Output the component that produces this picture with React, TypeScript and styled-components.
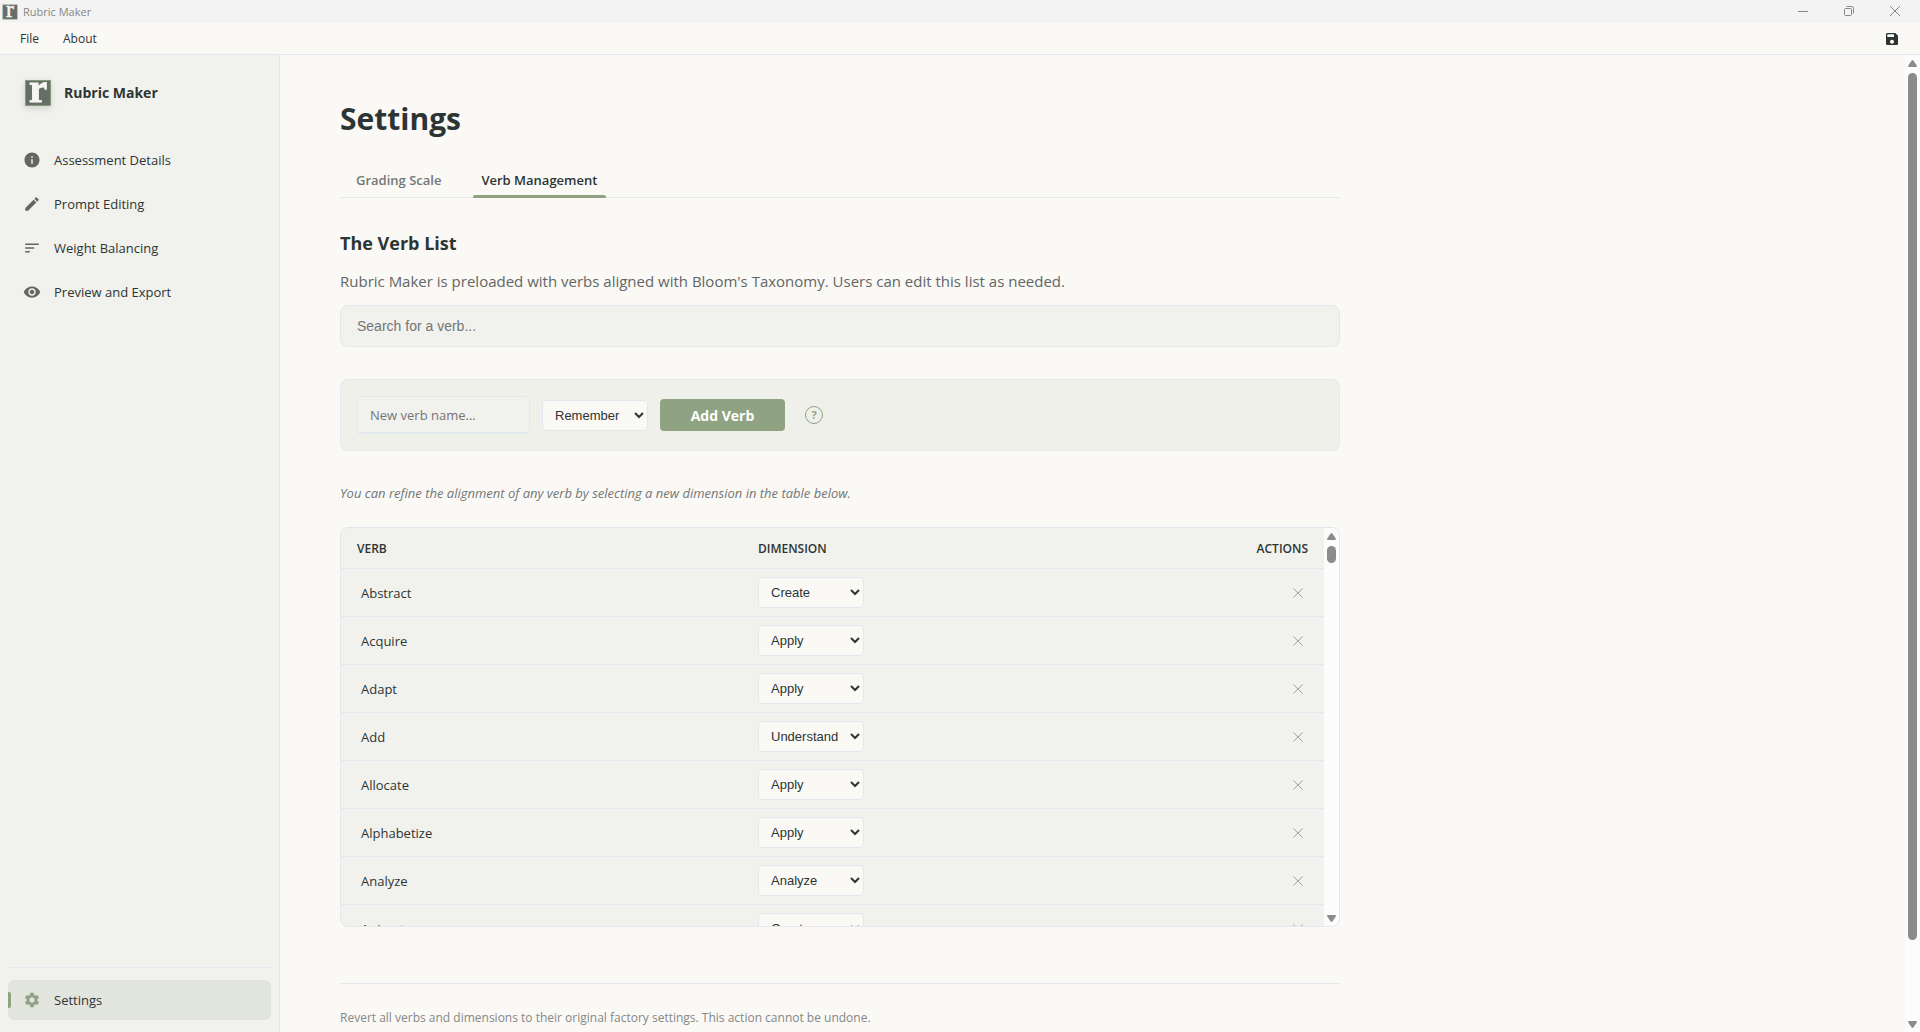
import React, { useState } from "react";
import styled, { createGlobalStyle } from "styled-components";
import { MdInfo, MdEdit, MdSort, MdVisibility, MdSettings, MdSave } from "react-icons/md";

const color = {
  page: "#faf9f6",
  panel: "#f1f1ed",
  border: "#e2e8f0",
  text: "#2d3534",
  soft: "#636665",
  muted: "#747776",
  accent: "#8fa382",
  active: "#e2e5de",
  thumb: "#8b8b8b",
};

const uiFont = '"Open Sans", "Noto Sans", sans-serif';
const controlFont = '"Liberation Sans", Arial, sans-serif';

const GlobalStyle = createGlobalStyle`
  *, *::before, *::after { box-sizing: border-box; }
  body {
    margin: 0;
    background: ${color.page};
    color: ${color.text};
    font-family: ${uiFont};
    font-size: 13px;
    line-height: 20px;
  }
  button { font-family: inherit; cursor: pointer; }
`;

const Window = styled.div`
  display: flex;
  flex-direction: column;
  height: 100vh;
  overflow: hidden;
`;

const TitleBar = styled.header`
  display: flex;
  align-items: center;
  flex: none;
  height: 23px;
  padding: 0 20px 0 2px;
  gap: 5px;
  background: #f3f3f3;
  color: #868686;
  font-size: 11px;
`;

const WindowControls = styled.div`
  display: flex;
  gap: 36px;
  margin-left: auto;
`;

const WindowButton = styled.button`
  display: flex;
  width: 10px;
  height: 20px;
  padding: 0 0 2px;
  border: 0;
  background: none;
  align-items: center;
  color: #868686;
`;

const MenuBar = styled.nav`
  display: flex;
  align-items: center;
  flex: none;
  height: 32px;
  padding: 1px 20px 0;
  gap: 24px;
  border-bottom: 1px solid ${color.border};
`;

const MenuButton = styled.button`
  padding: 0;
  border: 0;
  background: none;
  color: ${color.text};
  font-size: 12px;
  line-height: 20px;
`;

const SaveButton = styled(MenuButton)`
  display: flex;
  margin-left: auto;
`;

const Body = styled.div`
  display: flex;
  flex: 1;
  min-height: 0;
`;

const Sidebar = styled.aside`
  display: flex;
  flex-direction: column;
  flex: none;
  width: 280px;
  padding: 24px 8px 12px;
  background: ${color.panel};
  border-right: 1px solid ${color.border};
`;

const Brand = styled.div`
  display: flex;
  align-items: center;
  gap: 12px;
  padding: 0 16px;
  margin-bottom: 33px;
  font-size: 14px;
  font-weight: 700;
  svg { filter: drop-shadow(0 2px 3px rgba(0, 0, 0, 0.15)); }
`;

const NavList = styled.nav`
  display: flex;
  flex-direction: column;
  gap: 4px;
`;

const NavFooter = styled.div`
  margin-top: auto;
  padding-top: 12px;
  border-top: 1px solid ${color.border};
`;

const NavItem = styled.button<{ $active?: boolean }>`
  position: relative;
  display: flex;
  align-items: center;
  width: 100%;
  height: 40px;
  padding: 0 15px;
  gap: 13px;
  border: 0;
  border-radius: 6px;
  background: ${(p) => (p.$active ? color.active : "transparent")};
  color: ${color.text};
  font-size: 13px;
  font-weight: ${(p) => (p.$active ? 500 : 400)};
  line-height: 20px;
  svg { color: ${(p) => (p.$active ? color.accent : color.soft)}; }
  &::before {
    content: "";
    display: ${(p) => (p.$active ? "block" : "none")};
    position: absolute;
    left: 0;
    top: 12px;
    width: 3px;
    height: 16px;
    background: ${color.accent};
    border-radius: 0 2px 2px 0;
  }
`;

const Main = styled.main`
  flex: 1;
  min-width: 0;
  padding: 40px 60px;
  overflow-y: auto;
  scrollbar-width: none;
`;

const Content = styled.div`
  max-width: 1000px;
`;

const PageTitle = styled.h1`
  margin: 0 0 20px;
  font-size: 30px;
  font-weight: 700;
  line-height: 48px;
`;

const Tabs = styled.div`
  display: flex;
  gap: 8px;
  margin-bottom: 33px;
  border-bottom: 1px solid ${color.border};
`;

const Tab = styled.button<{ $active?: boolean }>`
  position: relative;
  padding: 7px 16px;
  border: 0;
  background: none;
  color: ${(p) => (p.$active ? color.text : color.muted)};
  font-size: 13px;
  font-weight: 600;
  line-height: 20px;
  &::after {
    content: "";
    display: ${(p) => (p.$active ? "block" : "none")};
    position: absolute;
    left: 5%;
    bottom: -1px;
    width: 90%;
    height: 3px;
    background: ${color.accent};
    border-radius: 2px 2px 0 0;
  }
`;

const SectionTitle = styled.h2`
  margin: 0 0 14px;
  font-size: 18px;
  font-weight: 700;
  line-height: 24px;
`;

const Lead = styled.p`
  margin: 0 0 12px;
  color: ${color.soft};
  font-size: 15px;
  line-height: 24px;
`;

const SearchInput = styled.input`
  display: block;
  width: 100%;
  height: 42px;
  margin-bottom: 32px;
  padding: 0 16px;
  border: 1px solid ${color.border};
  border-radius: 8px;
  background: ${color.panel};
  color: ${color.text};
  font-family: ${controlFont};
  font-size: 14px;
  &::placeholder { color: #757575; }
`;

const AddForm = styled.form`
  display: flex;
  align-items: center;
  gap: 12px;
  height: 72px;
  margin-bottom: 32px;
  padding: 0 16px;
  border: 1px solid ${color.border};
  border-radius: 8px;
  background: #f0f0eb;
`;

const NameInput = styled.input`
  width: 173px;
  height: 38px;
  padding: 0 12px;
  border: 1px solid ${color.border};
  border-bottom-width: 2px;
  border-radius: 4px;
  background: ${color.panel};
  color: ${color.text};
  font-family: ${uiFont};
  font-size: 13px;
  &::placeholder { color: #757575; }
`;

const DimensionSelect = styled.select`
  display: block;
  width: 106px;
  height: 31px;
  padding: 0 0 0 8px;
  border: 1px solid ${color.border};
  border-radius: 4px;
  background: ${color.page};
  color: ${color.text};
  font-family: ${controlFont};
  font-size: 13px;
`;

const AddButton = styled.button`
  width: 125px;
  height: 32px;
  border: 0;
  border-radius: 4px;
  background: ${color.accent};
  color: #fff;
  font-size: 14px;
  font-weight: 700;
`;

const HelpButton = styled.button`
  width: 18px;
  height: 18px;
  margin-left: 8px;
  padding: 0;
  border: 1px solid ${color.accent};
  border-radius: 50%;
  background: none;
  color: ${color.accent};
  font-size: 11px;
  font-weight: 700;
  line-height: 16px;
`;

const Hint = styled.p`
  margin: 0 0 24px;
  color: ${color.muted};
  font-size: 13px;
  font-style: italic;
`;

const TableFrame = styled.div`
  display: flex;
  height: 400px;
  margin-bottom: 56px;
  border: 1px solid ${color.border};
  border-radius: 8px;
  background: ${color.panel};
  overflow: hidden;
`;

const TableScroll = styled.div`
  flex: 1;
  min-width: 0;
  overflow-y: auto;
  scrollbar-width: none;
`;

const Table = styled.table`
  width: 100%;
  table-layout: fixed;
  border-collapse: separate;
  border-spacing: 0;
`;

const HeadCell = styled.th<{ $width?: string; $end?: boolean }>`
  position: sticky;
  top: 0;
  z-index: 1;
  width: ${(p) => p.$width ?? "auto"};
  height: 41px;
  padding: 2px 16px 0;
  border-bottom: 1px solid ${color.border};
  background: ${color.panel};
  font-size: 12px;
  font-weight: 600;
  text-align: ${(p) => (p.$end ? "right" : "left")};
  text-transform: uppercase;
`;

const Cell = styled.td`
  height: 48px;
  padding: 0 16px;
  border-bottom: 1px solid ${color.border};
`;

const VerbName = styled.span`
  padding: 4px;
  font-size: 13px;
`;

const DeleteButton = styled.button`
  display: flex;
  align-items: center;
  justify-content: center;
  width: 20px;
  height: 20px;
  margin-left: auto;
  padding: 0;
  border: 0;
  background: none;
  color: #a0a3a1;
`;

const ResetSection = styled.section`
  padding: 24px 0;
  border-top: 1px solid ${color.border};
`;

const ResetText = styled.p`
  margin: 0;
  color: #858887;
  font-size: 12px;
`;

const Track = styled.div`
  display: flex;
  flex-direction: column;
  align-items: center;
  flex: none;
  width: 15px;
  padding: 5px 0 4px;
  background: #fcfcfc;
`;

const Thumb = styled.div<{ $size: string }>`
  flex: none;
  width: 9px;
  height: ${(p) => p.$size};
  margin: 6px 0 auto;
  border-radius: 5px;
  background: ${color.thumb};
`;

const LogoMark = styled.svg`
  flex: none;
  overflow: visible;
`;

function Scrollbar({ size }: { size: string }) {
  return (
    <Track aria-hidden="true">
      <svg width="9" height="7" viewBox="0 0 9 7" fill={color.thumb}>
        <path d="M4.500 0Q5 0 5.500.8L8.800 5.600Q9.200 7 8 7H1Q-.2 7 .2 5.600L3.500.8Q4 0 4.500 0Z" />
      </svg>
      <Thumb $size={size} />
      <svg width="9" height="7" viewBox="0 0 9 7" fill={color.thumb}>
        <path d="M4.500 7Q5 7 5.500 6.200L8.800 1.400Q9.200 0 8 0H1Q-.2 0 .2 1.400L3.500 6.200Q4 7 4.500 7Z" />
      </svg>
    </Track>
  );
}

function Logo({ size }: { size: number }) {
  return (
    <LogoMark width={size} height={size} viewBox="0 0 28 28" aria-hidden="true">
      <rect x="1.500" y="1.500" width="25" height="25" fill="#666d6b" stroke="#869a7c" />
      <text
        x="14"
        y="23"
        fill="#f6f5f1"
        stroke="#f6f5f1"
        strokeWidth="1"
        fontFamily="Liberation Serif, serif"
        fontSize="41"
        textAnchor="middle"
      >
        r
      </text>
    </LogoMark>
  );
}

const dimensions = ["Remember", "Understand", "Apply", "Analyze", "Evaluate", "Create"];

const initialVerbs = [
  { name: "Abstract", dimension: "Create" },
  { name: "Acquire", dimension: "Apply" },
  { name: "Adapt", dimension: "Apply" },
  { name: "Add", dimension: "Understand" },
  { name: "Allocate", dimension: "Apply" },
  { name: "Alphabetize", dimension: "Apply" },
  { name: "Analyze", dimension: "Analyze" },
  { name: "Animate", dimension: "Create" },
];

const navItems = [
  { label: "Assessment Details", icon: MdInfo },
  { label: "Prompt Editing", icon: MdEdit },
  { label: "Weight Balancing", icon: MdSort },
  { label: "Preview and Export", icon: MdVisibility },
];

const DimensionOptions = () => (
  <>
    {dimensions.map((d) => (
      <option key={d}>{d}</option>
    ))}
  </>
);

export default function App() {
  const [verbs, setVerbs] = useState(initialVerbs);
  const [query, setQuery] = useState("");
  const [name, setName] = useState("");
  const [dimension, setDimension] = useState("Remember");

  const addVerb = (e: React.FormEvent) => {
    e.preventDefault();
    if (!name.trim()) return;
    setVerbs([...verbs, { name: name.trim(), dimension }].sort((a, b) => a.name.localeCompare(b.name)));
    setName("");
  };

  const visible = verbs.filter((v) => v.name.toLowerCase().includes(query.toLowerCase()));

  return (
    <Window>
      <GlobalStyle />
      <TitleBar>
        <Logo size={16} />
        <span>Rubric Maker</span>
        <WindowControls>
          <WindowButton aria-label="Minimize">
            <svg width="10" height="10" viewBox="0 0 10 10" stroke="currentColor"><path d="M0 5.500H10" /></svg>
          </WindowButton>
          <WindowButton aria-label="Restore">
            <svg width="10" height="10" viewBox="0 0 10 10" fill="none" stroke="currentColor">
              <rect x="0.500" y="2.500" width="7" height="7" rx="1" />
              <path d="M2.500.5H7.500Q9.500.5 9.500 2.500V7.500" />
            </svg>
          </WindowButton>
          <WindowButton aria-label="Close">
            <svg width="10" height="10" viewBox="0 0 10 10" stroke="currentColor"><path d="M0 0L10 10M10 0L0 10" /></svg>
          </WindowButton>
        </WindowControls>
      </TitleBar>
      <MenuBar aria-label="Application menu">
        <MenuButton>File</MenuButton>
        <MenuButton>About</MenuButton>
        <SaveButton aria-label="Save"><MdSave size={16} /></SaveButton>
      </MenuBar>
      <Body>
        <Sidebar>
          <Brand>
            <Logo size={28} />
            <span>Rubric Maker</span>
          </Brand>
          <NavList aria-label="Sections">
            {navItems.map(({ label, icon: Icon }) => (
              <NavItem key={label}>
                <Icon size={18} />
                {label}
              </NavItem>
            ))}
          </NavList>
          <NavFooter>
            <NavItem $active aria-current="page">
              <MdSettings size={18} />
              Settings
            </NavItem>
          </NavFooter>
        </Sidebar>
        <Main>
          <Content>
            <PageTitle>Settings</PageTitle>
            <Tabs role="tablist">
              <Tab role="tab" aria-selected={false}>Grading Scale</Tab>
              <Tab role="tab" aria-selected $active>Verb Management</Tab>
            </Tabs>
            <SectionTitle>The Verb List</SectionTitle>
            <Lead>
              Rubric Maker is preloaded with verbs aligned with Bloom's Taxonomy. Users can edit this list as needed.
            </Lead>
            <SearchInput
              aria-label="Search for a verb"
              placeholder="Search for a verb..."
              value={query}
              onChange={(e) => setQuery(e.target.value)}
            />
            <AddForm onSubmit={addVerb}>
              <NameInput
                aria-label="New verb name"
                placeholder="New verb name..."
                value={name}
                onChange={(e) => setName(e.target.value)}
              />
              <DimensionSelect
                aria-label="Dimension of the new verb"
                value={dimension}
                onChange={(e) => setDimension(e.target.value)}
              >
                <DimensionOptions />
              </DimensionSelect>
              <AddButton type="submit">Add Verb</AddButton>
              <HelpButton type="button" aria-label="Help">?</HelpButton>
            </AddForm>
            <Hint>You can refine the alignment of any verb by selecting a new dimension in the table below.</Hint>
            <TableFrame>
              <TableScroll>
                <Table>
                  <thead>
                    <tr>
                      <HeadCell $width="401px">Verb</HeadCell>
                      <HeadCell>Dimension</HeadCell>
                      <HeadCell $width="120px" $end>Actions</HeadCell>
                    </tr>
                  </thead>
                  <tbody>
                    {visible.map((v) => (
                      <tr key={v.name}>
                        <Cell><VerbName>{v.name}</VerbName></Cell>
                        <Cell>
                          <DimensionSelect
                            aria-label={`Dimension of ${v.name}`}
                            value={v.dimension}
                            onChange={(e) =>
                              setVerbs(verbs.map((o) => (o === v ? { ...o, dimension: e.target.value } : o)))
                            }
                          >
                            <DimensionOptions />
                          </DimensionSelect>
                        </Cell>
                        <Cell>
                          <DeleteButton
                            aria-label={`Delete ${v.name}`}
                            onClick={() => setVerbs(verbs.filter((o) => o !== v))}
                          >
                            <svg width="10" height="10" viewBox="0 0 10 10" stroke="currentColor">
                              <path d="M0.500 0.500L9.500 9.500M9.500 0.500L0.500 9.500" />
                            </svg>
                          </DeleteButton>
                        </Cell>
                      </tr>
                    ))}
                  </tbody>
                </Table>
              </TableScroll>
              <Scrollbar size="17px" />
            </TableFrame>
            <ResetSection>
              <ResetText>
                Revert all verbs and dimensions to their original factory settings. This action cannot be undone.
              </ResetText>
            </ResetSection>
          </Content>
        </Main>
        <Scrollbar size="calc(90% - 4px)" />
      </Body>
    </Window>
  );
}
